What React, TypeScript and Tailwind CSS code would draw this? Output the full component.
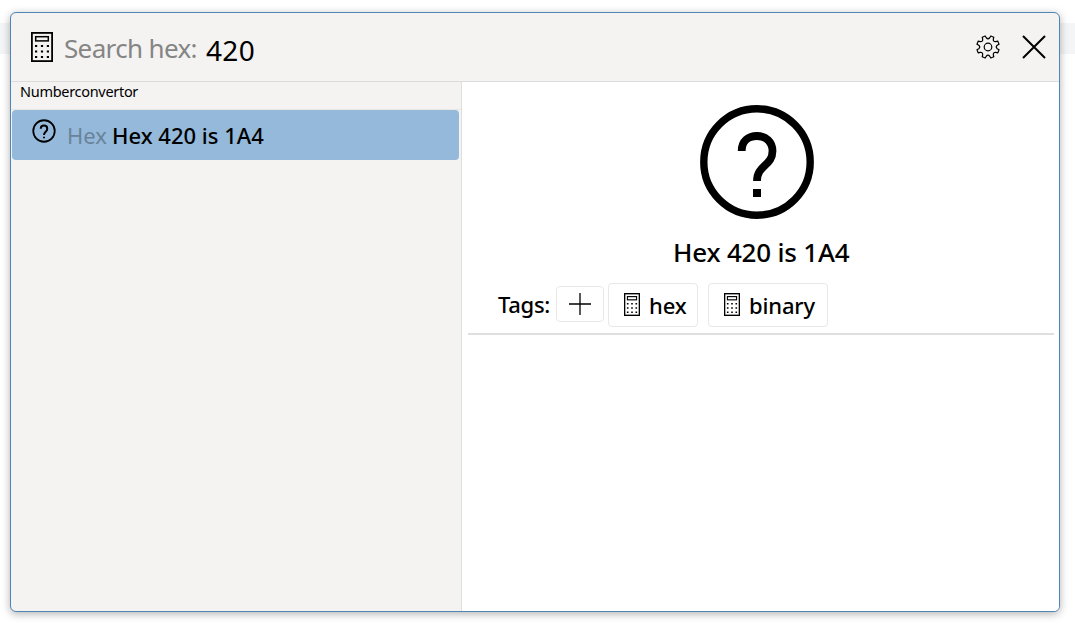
import React from "react";

function Calculator({ className }: { className: string }) {
  return (
    <svg className={className} viewBox="0 0 22 30" fill="none" stroke="black" preserveAspectRatio="none">
      <rect x="0.9" y="0.9" width="20.2" height="28.2" strokeWidth="1.8" />
      <rect x="4.7" y="4.7" width="12.6" height="4.2" strokeWidth="1.5" />
      {[14, 19.5, 25].map((y) => (
        <path key={y} d={`M4 ${y}h2.2M9.9 ${y}h2.2M15.8 ${y}h2.2`} strokeWidth="2" />
      ))}
    </svg>
  );
}

function Question({ className, thick = false }: { className: string; thick?: boolean }) {
  return (
    <svg className={className} viewBox="0 0 114 114" fill="none" stroke="black">
      <circle cx="57" cy="57" r={thick ? 53.2 : 51} strokeWidth={thick ? 7.4 : 8.5} />
      <path d="M41.7 46C41.7 36 48.5 31 57 31C66 31 72.5 37 72.5 46C72.5 61 57 60 57 76" strokeWidth={thick ? 7.8 : 9.5} />
      <path d="M57 84v8" strokeWidth={thick ? 8 : 9.5} />
    </svg>
  );
}

function Gear() {
  const point = (radius: number, degrees: number) => {
    const angle = (degrees * Math.PI) / 180;
    return `${(12 + radius * Math.sin(angle)).toFixed(2)} ${(12 - radius * Math.cos(angle)).toFixed(2)}`;
  };
  const outline = Array.from({ length: 8 }, (_, i) => {
    const a = i * 45 + 22.5;
    return `${point(11.4, a - 8)}L${point(11.4, a + 8)}L${point(9.4, a + 12)}Q${point(7.2, a + 22.5)} ${point(9.4, a + 33)}`;
  });
  return (
    <svg className="size-6" viewBox="0 0 24 24" fill="none" stroke="black" strokeWidth="1.2" strokeLinejoin="round">
      <path d={`M${outline.join("L")}Z`} />
      <circle cx="12" cy="12" r="3.8" />
    </svg>
  );
}

function Tag({ label, className }: { label: string; className: string }) {
  return (
    <div className={`flex h-11 items-start rounded-[4px] border border-[#e8e8e8] pl-[15px] ${className}`}>
      <Calculator className="mt-[9px] h-[23px] w-4 shrink-0" />
      <span className="ml-[9px] mt-[6px] text-[22px] font-medium leading-[30px] tracking-[-0.15px]">{label}</span>
    </div>
  );
}

export default function App() {
  return (
    <main className="h-[625px] w-[1075px] overflow-hidden bg-white pt-[23px] font-['Noto_Sans',sans-serif] text-black">
      <div className="h-[31px] bg-[#f3f5f6]">
        <section className="relative -top-[11px] ml-[10px] flex h-[600px] w-[1050px] flex-col overflow-hidden rounded-[6px] border border-[#4f86b3] bg-[#f4f3f1] shadow-[0_2px_9px_rgba(0,0,0,0.3)]">
          <header className="flex h-[69px] shrink-0 items-start border-b border-[#dcdcdc] pl-5">
            <Calculator className="mt-[19px] h-[30px] w-[22px]" />
            <span className="ml-[11px] mt-[17px] w-[142px] whitespace-nowrap text-[26px] leading-[36px] tracking-[-0.65px] text-[#858585]">Search hex:</span>
            <span className="mt-[19px] text-[28px] leading-[36px] tracking-[0.3px]">420</span>
            <div className="ml-auto mr-[13.5px] mt-[21.5px] flex gap-[22px]">
              <Gear />
              <svg className="size-6" viewBox="0 0 24 24" stroke="black" strokeWidth="2"><path d="M1 1L23 23M23 1L1 23" /></svg>
            </div>
          </header>
          <div className="flex min-h-0 flex-1">
            <aside className="w-[451px] border-r border-[#dedede]">
              <div className="h-[28px] border-b border-[#e9e7e5] pl-[9px] text-[14.5px] leading-[19px] tracking-[-0.3px]">Numberconvertor</div>
              <div className="ml-px flex h-[50px] w-[447px] items-start rounded-[4px] bg-[#94b9da]">
                <Question className="ml-5 mt-[9px] size-6" />
                <span className="ml-[11px] mt-[10px] w-[45px] text-[22px] leading-[30px] text-[#6b8399]">Hex</span>
                <span className="mt-[10px] whitespace-nowrap text-[22px] font-medium leading-[30px]">Hex 420 is 1A4</span>
              </div>
            </aside>
            <article className="flex-1 bg-white pl-[6px] pr-[5px]">
              <div className="h-[253px] border-b-2 border-[#dfdfdf] pt-[23px]">
                <Question thick className="ml-[232px] size-[114px]" />
                <h1 className="ml-[205px] mt-[15px] whitespace-nowrap text-[26px] font-medium leading-[36px] tracking-[-0.2px]">Hex 420 is 1A4</h1>
                <div className="mt-[13px] flex items-start pl-[30px]">
                  <span className="mt-[6px] w-[58px] text-[22px] font-medium leading-[30px] tracking-[-0.3px]">Tags:</span>
                  <button className="mt-[3px] flex h-9 w-12 items-center justify-center rounded-[4px] border border-[#e8e8e8]">
                    <svg className="size-[22px]" viewBox="0 0 22 22" stroke="black" strokeWidth="1.3"><path d="M0 11H22M11 0V22" /></svg>
                  </button>
                  <Tag label="hex" className="ml-1 w-[90px]" />
                  <Tag label="binary" className="ml-[10px] w-[120px]" />
                </div>
              </div>
            </article>
          </div>
        </section>
      </div>
    </main>
  );
}
